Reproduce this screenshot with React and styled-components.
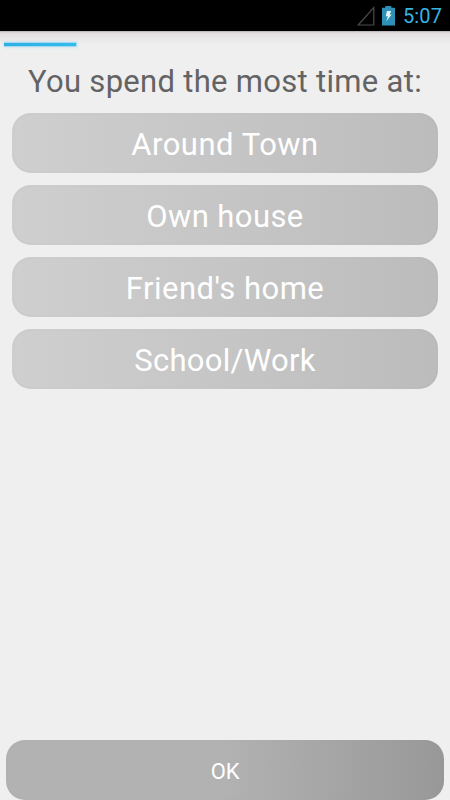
import React, { useState } from 'react';
import styled, { createGlobalStyle } from 'styled-components';

const GlobalStyle = createGlobalStyle`
  * {
    box-sizing: border-box;
  }
  body {
    margin: 0;
    background-color: #efefef;
    font-family: Roboto, 'Liberation Sans', sans-serif;
  }
`;

const Screen = styled.div`
  display: flex;
  flex-direction: column;
  height: 100vh;
  overflow: hidden;
`;

const StatusBar = styled.div`
  display: flex;
  align-items: center;
  justify-content: flex-end;
  flex: none;
  height: 31px;
  padding-right: 8px;
  background-color: #000;
`;

const Clock = styled.span`
  margin-left: 8px;
  color: #33b5e5;
  font-size: 20px;
  line-height: 31px;
  padding-top: 2px;
  letter-spacing: 0.1px;
`;

const ProgressArea = styled.div`
  flex: none;
  height: 33px;
  padding: 11px 4px 0;
  background: linear-gradient(#aaa5a8 0, #d5d1d4 1px, #e3e0e2 3px, #e9e8e9 8px, #efefef 14px);
`;

const Progress = styled.div`
  width: ${(props) => props.$width};
  height: 5px;
  background: linear-gradient(90deg, #2eb0e2, #33bbee);
  border: solid #a3daef;
  border-width: 1px 1px 1px 0;
  box-shadow: 0 0 3px rgba(51, 181, 229, 0.25);
`;

const Question = styled.h1`
  flex: none;
  height: 49px;
  margin: 0;
  color: #636363;
  font-size: 31px;
  font-weight: 400;
  line-height: 36px;
  letter-spacing: 0.3px;
  text-align: center;
  white-space: nowrap;
`;

const Answers = styled.div`
  display: flex;
  flex-direction: column;
  flex: 1;
  gap: 12px;
  padding: 0 12px;
`;

const AnswerButton = styled.button`
  height: 60px;
  padding: 3px 0 0;
  border: 0.5px solid transparent;
  border-radius: 19px;
  background: linear-gradient(90deg, #cfcfcf, #bcbcbc) border-box;
  box-shadow: inset 0 0 1px rgba(150, 150, 150, 0.35);
  color: #fff;
  font-family: inherit;
  font-size: 31px;
  letter-spacing: ${(props) => props.$spacing || '0.3px'};
`;

const OkButton = styled(AnswerButton)`
  flex: none;
  margin: 0 6px;
  padding-top: 2px;
  background: linear-gradient(90deg, #b2b2b2 0%, #b2b2b2 50%, #989898 100%) border-box;
  font-size: 22px;
`;

const SignalIcon = () => (
  <svg width="18" height="20" viewBox="0 0 18 20" fill="none">
    <path d="M1.2 19 L16.8 1.6 V19 Z" stroke="#4b4b4b" strokeWidth="1.2" />
  </svg>
);

const BatteryIcon = styled(({ className }) => (
  <svg className={className} width="13" height="20" viewBox="0 0 13 20">
    <path d="M3.3 0 H9.3 V1.8 H13 V19.5 H0 V1.8 H3.3 Z" fill="#2f90b7" />
    <path d="M5 5 H9.2 L7.6 8.6 H9.6 L4.4 15.2 L5.8 10.3 H3.7 Z" fill="#e4f5fb" />
  </svg>
))`
  margin-left: 7px;
`;

const answers = [
  { text: 'Around Town', spacing: '0.5px' },
  { text: 'Own house', spacing: '0.4px' },
  { text: "Friend's home", spacing: '0.5px' },
  { text: 'School/Work', spacing: '0.3px' },
];

function App() {
  const [selected, setSelected] = useState(null);

  return (
    <Screen>
      <GlobalStyle />
      <StatusBar>
        <SignalIcon />
        <BatteryIcon />
        <Clock>5:07</Clock>
      </StatusBar>
      <ProgressArea>
        <Progress $width="73px" />
      </ProgressArea>
      <Question>You spend the most time at:</Question>
      <Answers>
        {answers.map(({ text, spacing }) => (
          <AnswerButton
            key={text}
            $spacing={spacing}
            aria-pressed={selected === text}
            onClick={() => setSelected(text)}
          >
            {text}
          </AnswerButton>
        ))}
      </Answers>
      <OkButton $spacing="-0.2px">OK</OkButton>
    </Screen>
  );
}

export default App;
